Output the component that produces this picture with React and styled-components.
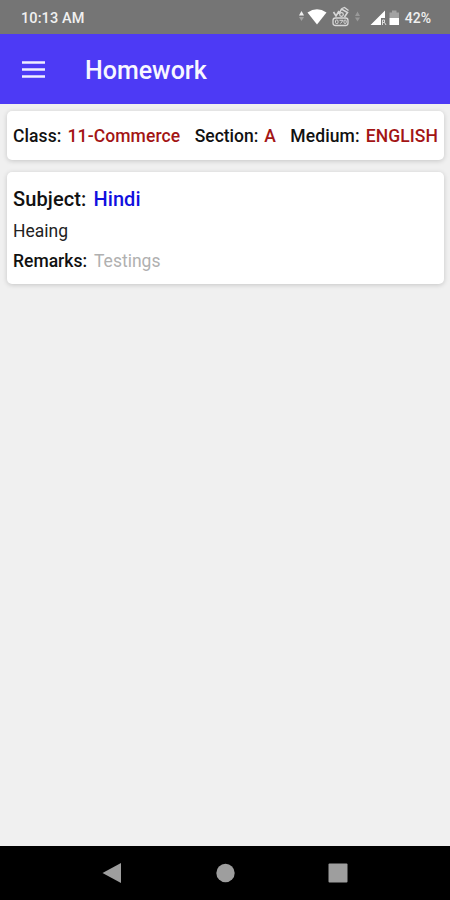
import React from 'react';
import styled, { createGlobalStyle } from 'styled-components';

const GlobalStyle = createGlobalStyle`
  * {
    box-sizing: border-box;
  }
  body {
    margin: 0;
    background: #f0f0f0;
    font-family: Roboto, sans-serif;
  }
`;

const Screen = styled.div`
  display: flex;
  flex-direction: column;
  width: 450px;
  height: 900px;
  background: #f0f0f0;
  overflow: hidden;
`;

const StatusBar = styled.div`
  display: flex;
  justify-content: space-between;
  align-items: center;
  height: 34px;
  padding: 2px 19px 0 21px;
  background: #757575;
  color: #f0f0f0;
`;

const Clock = styled.span`
  padding-top: 1px;
  font-size: 14.5px;
  font-weight: 500;
  line-height: 20px;
  letter-spacing: 0.1px;
`;

const StatusRight = styled.div`
  display: flex;
  align-items: center;
`;

const StatusIcons = styled.svg`
  display: block;
  width: 106px;
  height: 24px;
`;

const Battery = styled.span`
  font-size: 14px;
  font-weight: 500;
  line-height: 20px;
`;

const Header = styled.header`
  display: flex;
  align-items: center;
  height: 70px;
  padding: 2px 22px 0;
  background: #4d3af5;
  color: #f8f7ff;
`;

const MenuIcon = styled.svg`
  display: block;
  width: 23px;
  height: 18px;
  margin-right: 40px;
  margin-bottom: 2px;
`;

const Title = styled.h1`
  margin: 0;
  padding-top: 1px;
  font-size: 25px;
  font-weight: 500;
  line-height: 32px;
`;

const Content = styled.main`
  display: flex;
  flex: 1;
  flex-direction: column;
  gap: 12px;
  padding: 7px 6px 0 7px;
`;

const Card = styled.section`
  border-radius: 5px;
  background: #fff;
  box-shadow: 0 1px 5px rgba(0, 0, 0, 0.18);
`;

const InfoCard = styled(Card)`
  display: flex;
  justify-content: space-between;
  align-items: center;
  height: 49px;
  padding: 1px 6px 0;
`;

const HomeworkCard = styled(Card)`
  height: 112px;
  padding: 11px 6px 0;
`;

const Field = styled.div`
  display: flex;
  gap: ${props => props.$gap || '6px'};
  font-size: ${props => props.$size || '17.5px'};
  line-height: ${props => props.$line || '30px'};
  letter-spacing: ${props => props.$spacing || '0'};
  white-space: nowrap;
`;

const Label = styled.span`
  color: #111;
  font-weight: 500;
`;

const Value = styled.span`
  color: ${props => props.$color || '#a31515'};
  font-weight: ${props => props.$weight || 500};
`;

const NavBar = styled.nav`
  display: flex;
  align-items: center;
  justify-content: space-between;
  height: 54px;
  padding: 0 102px;
  background: #000;
`;

const NavIcon = styled.svg`
  display: block;
  width: 20px;
  height: 20px;
  fill: #9e9e9e;
`;

const App = () => (
  <>
    <GlobalStyle />
    <Screen>
      <StatusBar>
        <Clock>10:13 AM</Clock>
        <StatusRight>
          <StatusIcons viewBox="299 6 106 24">
            {/* data arrows */}
            <path d="M299 15.5l2.5-4.5 2.5 4.5z" fill="#eee" />
            <path d="M299 17l2.5 4 2.5-4z" fill="#a0a0a0" />
            {/* wifi */}
            <path d="M307.500 12.500Q317 6 326.500 12.500L317 24.500z" fill="#fff" />
            {/* volte */}
            <g fill="none" stroke="#d8d8d8">
              <path d="M333.500 12l2.500 4 3-5M339 14l2.500-5 6 3.500-3 4.500" strokeWidth="1.600" />
              <path d="M342 8.500l2.500-1 4 3" strokeWidth="1.300" />
              <circle cx="341.500" cy="14.500" r="1.800" strokeWidth="1.200" />
              <rect x="333" y="18" width="15" height="7.500" rx="2.500" strokeWidth="1.300" />
              <rect x="335.500" y="20" width="2.500" height="3.500" rx="1" />
              <path d="M339.500 20.300h3.500l-2.500 3.200" />
              <rect x="344" y="20" width="2.200" height="3.500" rx="1" />
            </g>
            <path d="M355 16l2.500-4.500 2.500 4.500zM355 17.500l2.500 4 2.500-4z" fill="#999" />
            {/* mobile signal */}
            <path d="M370.500 25L385 10.500V18h-4v7z" fill="#fff" />
            <path d="M382.500 25v-5h2v2.500h-2M384.500 22.500l1.500 2.500" fill="none" stroke="#ddd" />
            {/* battery */}
            <path d="M389.500 12.500h2.500v-2h4.500v2h2.500V18h-9.500z" fill="#a3a3a3" />
            <path d="M389.500 18h9.500v7h-9.500z" fill="#fff" />
          </StatusIcons>
          <Battery>42%</Battery>
        </StatusRight>
      </StatusBar>

      <Header>
        <MenuIcon viewBox="0 0 23 18">
          <path d="M0 2.500h23M0 9.500h23M0 16.500h23" stroke="#f0eeff" strokeWidth="2.300" />
        </MenuIcon>
        <Title>Homework</Title>
      </Header>

      <Content>
        <InfoCard>
          <Field $spacing="0.1px">
            <Label>Class:</Label>
            <Value>11-Commerce</Value>
          </Field>
          <Field>
            <Label>Section:</Label>
            <Value>A</Value>
          </Field>
          <Field $spacing="0.1px">
            <Label>Medium:</Label>
            <Value>ENGLISH</Value>
          </Field>
        </InfoCard>

        <HomeworkCard>
          <Field $size="20px" $line="33px" $gap="7px" $spacing="0.1px">
            <Label>Subject:</Label>
            <Value $color="#1010e0">Hindi</Value>
          </Field>
          <Field>
            <Value $color="#222" $weight={400}>Heaing</Value>
          </Field>
          <Field $gap="7px">
            <Label>Remarks:</Label>
            <Value $color="#b0b0b0" $weight={400}>Testings</Value>
          </Field>
        </HomeworkCard>
      </Content>

      <NavBar>
        <NavIcon viewBox="0 0 20 20">
          <path d="M0.500 10L19 0v20z" />
        </NavIcon>
        <NavIcon viewBox="0 0 20 20">
          <circle cx="10.500" cy="10" r="9.200" />
        </NavIcon>
        <NavIcon viewBox="0 0 20 20">
          <rect x="0.500" y="0.500" width="19" height="19" rx="1" />
        </NavIcon>
      </NavBar>
    </Screen>
  </>
);

export default App;
